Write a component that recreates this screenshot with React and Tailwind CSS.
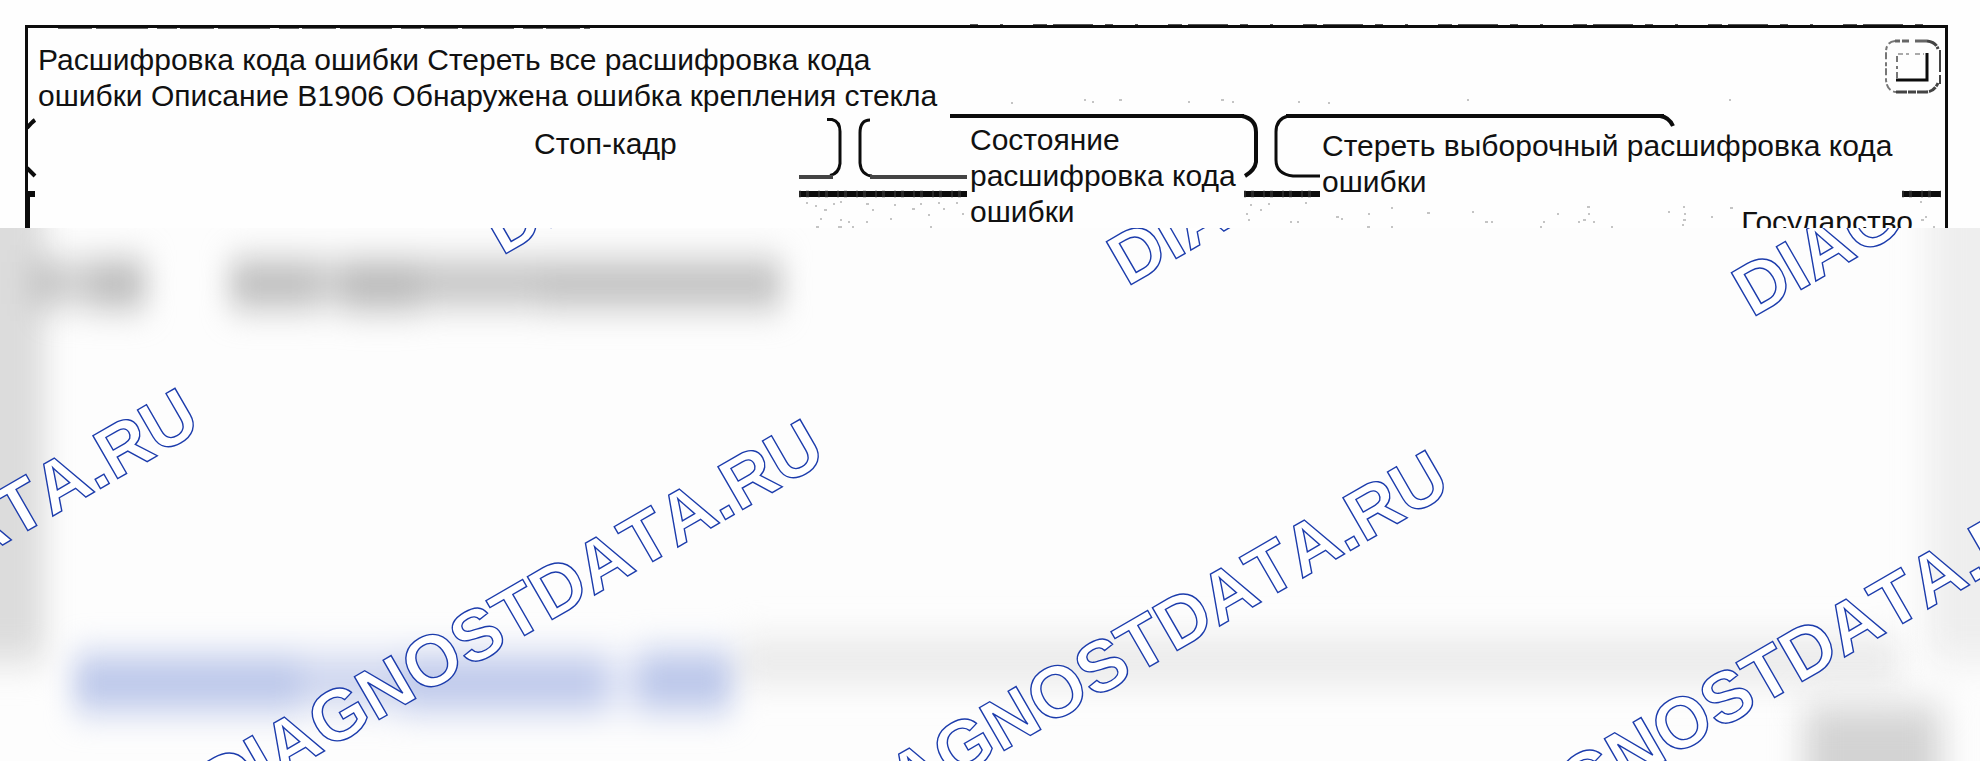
import React from 'react'

// start point of each watermark on the lower panel
const marks = [
  [-406, 553],
  [219, 584],
  [844, 615],
  [1469, 646],
  [502, 28],
  [1127, 59],
  [1752, 90],
]

// scanner dust: x, y, size
const dust = [
  [1011, 102, 2], [1084, 99, 2], [1092, 101, 2], [1119, 99, 3], [1188, 101, 2], [1221, 99, 3], [1232, 101, 2], [1298, 101, 2],
  [1328, 102, 2], [1467, 99, 2], [1729, 99, 2],
  [806, 202, 2], [815, 205, 2], [824, 209, 3], [820, 218, 2], [833, 203, 2], [840, 201, 2], [840, 219, 2], [848, 221, 2],
  [866, 203, 3], [872, 209, 2], [866, 221, 2], [890, 218, 2], [894, 204, 2], [912, 208, 3], [920, 203, 2], [928, 214, 2],
  [938, 202, 2], [943, 208, 2], [956, 202, 2], [962, 213, 2], [816, 226, 3], [838, 226, 4], [930, 226, 2], [852, 226, 2],
  [1246, 213, 2], [1250, 204, 2], [1260, 209, 2], [1268, 203, 2], [1290, 221, 2], [1297, 221, 2], [1305, 202, 2], [1248, 219, 2],
  [1336, 216, 3], [1341, 218, 2], [1368, 213, 2], [1367, 226, 3], [1391, 207, 2], [1391, 226, 2], [1427, 212, 3], [1472, 211, 2],
  [1485, 221, 3], [1491, 221, 2], [1543, 221, 2], [1540, 226, 2], [1557, 213, 2], [1578, 221, 2], [1583, 219, 3], [1587, 206, 3],
  [1588, 213, 2], [1593, 221, 2], [1611, 226, 2], [1668, 211, 2], [1683, 206, 2], [1684, 213, 2], [1683, 219, 3], [1682, 224, 2],
  [1711, 216, 2], [1730, 207, 3], [1921, 219, 3], [1925, 216, 2], [1933, 226, 2], [1920, 201, 2],
]

function ScanLines() {
  return (
    <svg className="absolute inset-0 w-full h-full pointer-events-none" fill="none" stroke="#0c0c0c" aria-hidden="true">
      {/* rough edge of the frame */}
      <path d="M58 28.500H590" stroke="#666" strokeDasharray="34 4 52 9 20 3" />
      <path d="M970 24.500H1940" stroke="#555" strokeDasharray="8 22 3 30 14 6 40 12" />

      {/* first tab */}
      <path d="M35 120q-3 2-8 8M27 168l8 8" strokeWidth="4" />
      <path d="M28 194h7" strokeWidth="6" />
      <path d="M28 196v32" strokeWidth="4" />
      <path d="M827 119.500h5q8 2 8 12v32q-1 10-10 12" strokeWidth="3" />
      <path d="M799 177h34" stroke="#444" strokeWidth="4" />

      {/* second tab */}
      <path d="M870 120q-10 0-10 13v30q1 12 12 13" strokeWidth="3" />
      <path d="M870 177h97" stroke="#444" strokeWidth="4" />
      <path d="M950 116h294" strokeWidth="4" />
      <path d="M1242 116q14 3 14 16v30q-1 8-11 14" strokeWidth="4" />

      {/* third tab */}
      <path d="M1288 116q-12 3-12 16v28q0 14 17 16h27" strokeWidth="3" />
      <path d="M1286 116h378" strokeWidth="4" />
      <path d="M1660 116q9 1 13 10" strokeWidth="4" />

      {/* rule under the tabs */}
      <path d="M799 194h168M1244 194h76M1902 194h39" strokeWidth="6" />
      <path d="M799 194h168M1244 194h76M1902 194h39" stroke="#444" strokeWidth="7" strokeDasharray="2 5 3 9" opacity="0.5" />

      <g fill="#c4c4c4" stroke="none">
        {dust.map(([x, y, s]) => (
          <rect key={`${x}-${y}`} x={x} y={y} width={s} height="2" />
        ))}
      </g>
    </svg>
  )
}

function WindowIcon() {
  return (
    <svg width="58" height="56" viewBox="0 0 58 56" fill="none" stroke="#777" strokeWidth="2" aria-hidden="true">
      <path d="M12 3q-9 1-9 11v28q1 11 10 12" strokeDasharray="7 3 4 2" />
      <path d="M12 3h32" stroke="#666" strokeWidth="3" strokeDasharray="5 2 7 6 13 2" />
      <path d="M44 3q9 1 11 8M13 54h30q8 0 12-9" stroke="#444" strokeWidth="3" strokeDasharray="11 1 8 1" />
      <path d="M57 12v34" stroke="#444" strokeWidth="2" strokeDasharray="22 3" />
      <path d="M14 40V16" strokeDasharray="6 3 3 4" />
      <path d="M15 16h26" stroke="#aaa" strokeDasharray="5 3 3 6" />
      <path d="M13 42h31V15" stroke="#0c0c0c" strokeWidth="3" />
    </svg>
  )
}

function Haze() {
  return (
    <svg className="absolute inset-0 w-full h-full" aria-hidden="true">
      <defs>
        <filter id="soft" x="-200" y="-200" width="2400" height="1000" filterUnits="userSpaceOnUse" colorInterpolationFilters="sRGB">
          <feGaussianBlur stdDeviation="14 18" />
        </filter>
        <filter id="edge" x="-400" y="-200" width="600" height="1000" filterUnits="userSpaceOnUse" colorInterpolationFilters="sRGB">
          <feGaussianBlur stdDeviation="16 18" />
        </filter>
      </defs>
      <g filter="url(#soft)">
        <rect x="-60" y="-60" width="105" height="494" fill="#dcdcdc" />
        <rect x="28" y="34" width="40" height="42" fill="#c0c0c0" />
        <rect x="68" y="34" width="20" height="42" fill="#d0d0d0" />
        <rect x="88" y="34" width="58" height="44" fill="#b6b6b6" />
        <rect x="230" y="34" width="86" height="44" fill="#b8b8b8" />
        <rect x="316" y="34" width="28" height="42" fill="#c8c8c8" />
        <rect x="344" y="34" width="76" height="46" fill="#b4b4b4" />
        <rect x="420" y="34" width="120" height="42" fill="#c0c0c0" />
        <rect x="540" y="34" width="242" height="44" fill="#bcbcbc" />
        <rect x="740" y="412" width="1160" height="42" fill="#e8e8e8" />
        <rect x="74" y="428" width="226" height="54" fill="#b9c5e9" />
        <rect x="300" y="428" width="100" height="50" fill="#ccd4ee" />
        <rect x="400" y="428" width="204" height="54" fill="#bcc7ea" />
        <rect x="604" y="428" width="36" height="54" fill="#dfe4f5" />
        <rect x="640" y="424" width="92" height="58" fill="#b9c5e9" />
      </g>
      <svg x="100%" className="overflow-visible">
        <g filter="url(#edge)">
          <rect x="-52" y="-60" width="140" height="494" fill="#eeeeee" />
          <rect x="-175" y="478" width="136" height="100" fill="#d3d3d3" />
        </g>
      </svg>
    </svg>
  )
}

function Watermark() {
  return (
    <svg className="absolute inset-0 w-full h-full font-['Liberation_Sans',Arial,sans-serif] text-[72px] font-bold [font-kerning:none]" fill="#fff" stroke="#1c3cac" strokeWidth="1.4">
      {marks.map(([x, y]) => (
        <text key={x} transform={`translate(${x} ${y}) rotate(-30)`}>DIAGNOSTDATA.RU</text>
      ))}
    </svg>
  )
}

export default function App() {
  return (
    <div className="min-h-screen flex flex-col bg-[#fdfdfd] text-[#111111] font-['Liberation_Sans',Arial,sans-serif] text-[30px] leading-9 overflow-hidden">
      <header className="relative h-[228px] overflow-hidden bg-[#fefefe] pt-[25px] pl-[25px] pr-8">
        <div className="border-3 border-b-0 border-[#0c0c0c] h-60">
          <div className="flex justify-between items-start h-[86px]">
            <p className="pt-3.5 pl-2.5 max-w-[930px]">
              Расшифровка кода ошибки Стереть все расшифровка кода ошибки Описание B1906 Обнаружена ошибка крепления стекла
            </p>
            <button className="mt-2.5 mr-1" aria-label="Окно">
              <WindowIcon />
            </button>
          </div>

          <div className="flex items-start h-[90px]">
            <button className="w-[830px] pt-3 pl-[506px] text-left">Стоп-кадр</button>
            <button className="w-[400px] pt-2 pl-28 pr-3 text-left">Состояние расшифровка кода ошибки</button>
            <button className="flex-1 pt-3.5 pl-16 pr-2 text-left">Стереть выборочный расшифровка кода ошибки</button>
          </div>

          <div className="text-right pr-8">Государство</div>
        </div>
        <ScanLines />
      </header>

      <main className="relative flex-1 min-h-[533px] overflow-hidden">
        <Haze />
        <Watermark />
      </main>
    </div>
  )
}
